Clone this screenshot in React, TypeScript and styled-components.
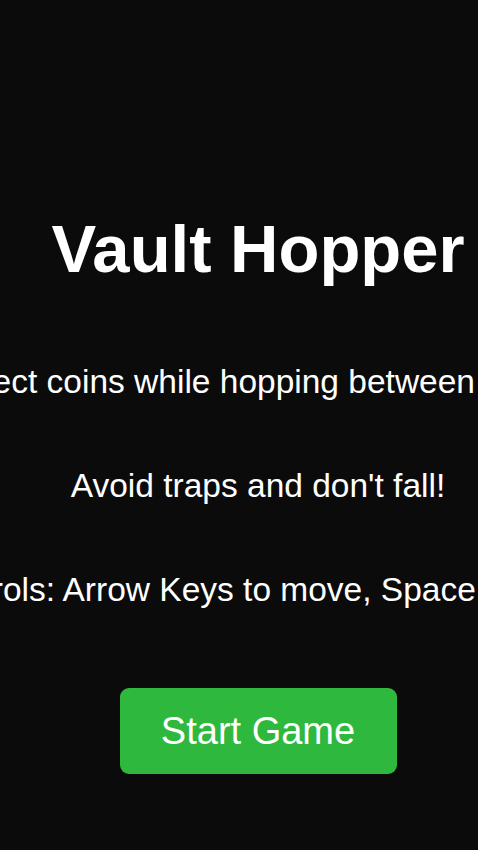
import React from "react";
import styled, { createGlobalStyle } from "styled-components";

const GlobalStyle = createGlobalStyle`
  html, body {
    margin: 0;
    padding: 0;
    background: #0b0b0b;
    overflow: hidden;
  }
  body {
    font-family: "Liberation Sans", Arial, Helvetica, sans-serif;
    color: #ffffff;
  }
`;

const Screen = styled.main`
  box-sizing: border-box;
  width: 478px;
  height: 850px;
  padding: 209px 0 0 38px;
  display: flex;
  flex-direction: column;
  align-items: center;
`;

const Title = styled.h1`
  margin: 0 0 73px;
  font-size: 67px;
  line-height: 80px;
  font-weight: 700;
  white-space: nowrap;
`;

const Line = styled.p`
  margin: 0 0 64px;
  font-size: 33.5px;
  line-height: 40px;
  white-space: nowrap;
`;

const StartButton = styled.button`
  margin-top: 14px;
  width: 277px;
  height: 86px;
  border: none;
  border-radius: 9px;
  background: #2eb83e;
  color: #ffffff;
  font-family: inherit;
  font-size: 38px;
  cursor: pointer;
`;

export default function App() {
  return (
    <>
      <GlobalStyle />
      <Screen>
        <Title>Vault Hopper</Title>
        <Line>Collect coins while hopping between vaults!</Line>
        <Line>Avoid traps and don't fall!</Line>
        <Line>Controls: Arrow Keys to move, Space to jump</Line>
        <StartButton>Start Game</StartButton>
      </Screen>
    </>
  );
}
